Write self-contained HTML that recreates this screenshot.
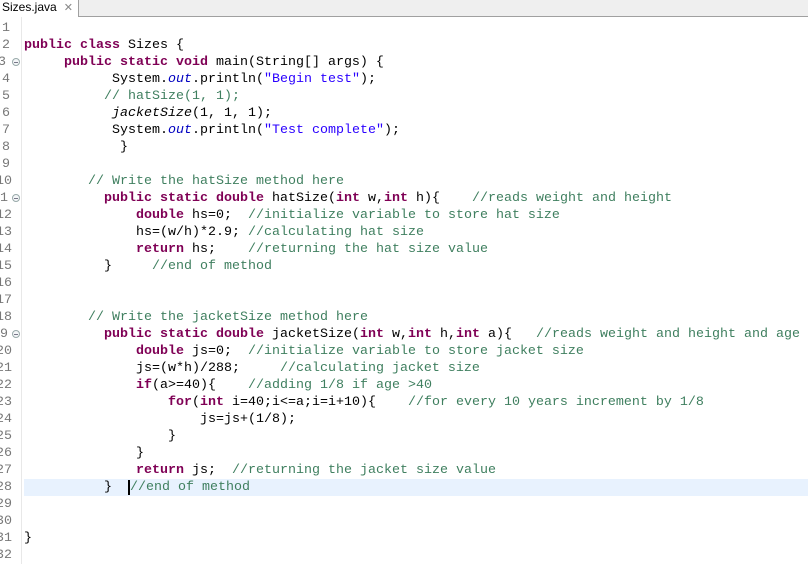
<!DOCTYPE html>
<html><head><style>
body{margin:0;width:808px;height:564px;overflow:hidden;background:#fff;font-family:"Liberation Mono",monospace;font-size:13.33px;position:relative}
#bar{position:absolute;left:0;top:0;width:808px;height:16px;background:#efefef;border-bottom:1px solid #a0a0a0}
#tab{position:absolute;left:0;top:0;width:79px;height:17px;background:#fff;border-right:1px solid #a0a0a0;font-family:"Liberation Sans",sans-serif;font-size:12px;line-height:15px;padding-left:2px;box-sizing:border-box;color:#000}
#tab span{color:#888;margin-left:7px;font-size:11px}
#gut{position:absolute;left:21px;top:17px;width:1px;height:547px;background:#e8e8e8}
.n{position:absolute;width:14px;text-align:right;color:#787878;left:-4px;height:17px;line-height:17px}
.l{position:absolute;height:17px;line-height:17px;white-space:pre;color:#000}
.k{color:#7f0055;font-weight:bold}
.c{color:#3f7f5f}
.s{color:#2a00ff}
.f{color:#0000c0;font-style:italic}
.i{font-style:italic}
#hl{position:absolute;left:24px;top:479px;width:784px;height:17px;background:#e8f2fe}
.fold{position:absolute;left:12px;width:8px;height:8px;border:1px solid #9aa;border-radius:50%;box-sizing:border-box;background:#f4f6f8}
.fold::after{content:"";position:absolute;left:1px;top:3px;width:4px;height:1px;background:#778}
.nf{left:-8px}
</style></head><body>
<div id="bar"></div>
<div id="tab">Sizes.java<span>✕</span></div>
<div id="gut"></div>
<div id="hl"></div>
<div class="n" style="top:20px">1</div>
<div class="n" style="top:37px">2</div>
<div class="n nf" style="top:54px">3</div><div class="fold" style="top:58px;left:12px"></div>
<div class="n" style="top:71px">4</div>
<div class="n" style="top:88px">5</div>
<div class="n" style="top:105px">6</div>
<div class="n" style="top:122px">7</div>
<div class="n" style="top:139px">8</div>
<div class="n" style="top:156px">9</div>
<div class="n" style="top:173px">10</div>
<div class="n nf" style="top:190px">11</div><div class="fold" style="top:194px"></div>
<div class="n" style="top:207px">12</div>
<div class="n" style="top:224px">13</div>
<div class="n" style="top:241px">14</div>
<div class="n" style="top:258px">15</div>
<div class="n" style="top:275px">16</div>
<div class="n" style="top:292px">17</div>
<div class="n" style="top:309px">18</div>
<div class="n nf" style="top:326px">19</div><div class="fold" style="top:330px"></div>
<div class="n" style="top:343px">20</div>
<div class="n" style="top:360px">21</div>
<div class="n" style="top:377px">22</div>
<div class="n" style="top:394px">23</div>
<div class="n" style="top:411px">24</div>
<div class="n" style="top:428px">25</div>
<div class="n" style="top:445px">26</div>
<div class="n" style="top:462px">27</div>
<div class="n" style="top:479px">28</div>
<div class="n" style="top:496px">29</div>
<div class="n" style="top:513px">30</div>
<div class="n" style="top:530px">31</div>
<div class="n" style="top:547px">32</div>

<div class="l" style="top:37px;left:24px"><span class="k">public class</span> Sizes {</div>
<div class="l" style="top:54px;left:64px"><span class="k">public static void</span> main(String[] args) {</div>
<div class="l" style="top:71px;left:112px">System.<span class="f">out</span>.println(<span class="s">"Begin test"</span>);</div>
<div class="l c" style="top:88px;left:104px">// hatSize(1, 1);</div>
<div class="l" style="top:105px;left:112px"><span class="i">jacketSize</span>(1, 1, 1);</div>
<div class="l" style="top:122px;left:112px">System.<span class="f">out</span>.println(<span class="s">"Test complete"</span>);</div>
<div class="l" style="top:139px;left:120px">}</div>
<div class="l c" style="top:173px;left:88px">// Write the hatSize method here</div>
<div class="l" style="top:190px;left:104px"><span class="k">public static double</span> hatSize(<span class="k">int</span> w,<span class="k">int</span> h){</div>
<div class="l c" style="top:190px;left:472px">//reads weight and height</div>
<div class="l" style="top:207px;left:136px"><span class="k">double</span> hs=0;  <span class="c">//initialize variable to store hat size</span></div>
<div class="l" style="top:224px;left:136px">hs=(w/h)*2.9; <span class="c">//calculating hat size</span></div>
<div class="l" style="top:241px;left:136px"><span class="k">return</span> hs;    <span class="c">//returning the hat size value</span></div>
<div class="l" style="top:258px;left:104px">}     <span class="c">//end of method</span></div>
<div class="l c" style="top:309px;left:88px">// Write the jacketSize method here</div>
<div class="l" style="top:326px;left:104px"><span class="k">public static double</span> jacketSize(<span class="k">int</span> w,<span class="k">int</span> h,<span class="k">int</span> a){</div>
<div class="l c" style="top:326px;left:536px">//reads weight and height and age</div>
<div class="l" style="top:343px;left:136px"><span class="k">double</span> js=0;  <span class="c">//initialize variable to store jacket size</span></div>
<div class="l" style="top:360px;left:136px">js=(w*h)/288;     <span class="c">//calculating jacket size</span></div>
<div class="l" style="top:377px;left:136px"><span class="k">if</span>(a&gt;=40){    <span class="c">//adding 1/8 if age &gt;40</span></div>
<div class="l" style="top:394px;left:168px"><span class="k">for</span>(<span class="k">int</span> i=40;i&lt;=a;i=i+10){    <span class="c">//for every 10 years increment by 1/8</span></div>
<div class="l" style="top:411px;left:200px">js=js+(1/8);</div>
<div class="l" style="top:428px;left:168px">}</div>
<div class="l" style="top:445px;left:136px">}</div>
<div class="l" style="top:462px;left:136px"><span class="k">return</span> js;  <span class="c">//returning the jacket size value</span></div>
<div class="l" style="top:479px;left:104px">}  </div>
<div style="position:absolute;left:128px;top:480px;width:2px;height:15px;background:#000"></div>
<div class="l c" style="top:479px;left:130px">//end of method</div>
<div class="l" style="top:530px;left:24px">}</div>
</body></html>
